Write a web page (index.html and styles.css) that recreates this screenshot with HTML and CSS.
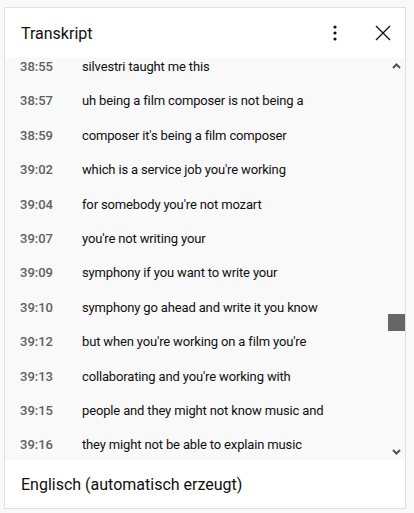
FILE: index.html
```html
<!DOCTYPE html>
<html>
<head>
<meta charset="utf-8">
<link rel="stylesheet" href="styles.css">
</head>
<body>
<div class="panel">
  <div class="header">
    <div class="title">Transkript</div>
    <div class="actions">
      <svg class="icon-more" width="24" height="24" viewBox="0 0 24 24"><circle cx="12" cy="6" r="1.6"/><circle cx="12" cy="12" r="1.6"/><circle cx="12" cy="18" r="1.6"/></svg>
      <svg class="icon-close" width="24" height="24" viewBox="0 0 24 24"><path d="M5 5 L19 19 M19 5 L5 19" stroke="#0f0f0f" stroke-width="1.3" fill="none"/></svg>
    </div>
  </div>
  <div class="body">
    <div class="list">
      <div class="rows">
        <div class="row"><span class="ts">38:55</span><span class="txt">silvestri taught me this</span></div>
        <div class="row"><span class="ts">38:57</span><span class="txt">uh being a film composer is not being a</span></div>
        <div class="row"><span class="ts">38:59</span><span class="txt">composer it's being a film composer</span></div>
        <div class="row"><span class="ts">39:02</span><span class="txt">which is a service job you're working</span></div>
        <div class="row"><span class="ts">39:04</span><span class="txt">for somebody you're not mozart</span></div>
        <div class="row"><span class="ts">39:07</span><span class="txt">you're not writing your</span></div>
        <div class="row"><span class="ts">39:09</span><span class="txt">symphony if you want to write your</span></div>
        <div class="row"><span class="ts">39:10</span><span class="txt">symphony go ahead and write it you know</span></div>
        <div class="row"><span class="ts">39:12</span><span class="txt">but when you're working on a film you're</span></div>
        <div class="row"><span class="ts">39:13</span><span class="txt">collaborating and you're working with</span></div>
        <div class="row"><span class="ts">39:15</span><span class="txt">people and they might not know music and</span></div>
        <div class="row"><span class="ts">39:16</span><span class="txt">they might not be able to explain music</span></div>
      </div>
    </div>
    <div class="scrollbar">
      <svg class="arrow" width="17" height="17" viewBox="0 0 17 17"><path d="M5 10 L8.5 6.5 L12 10" stroke="#505050" stroke-width="2" fill="none"/></svg>
      <div class="track"><div class="thumb" style="margin-top:239px"></div></div>
      <svg class="arrow" width="17" height="17" viewBox="0 0 17 17"><path d="M5 7 L8.5 10.5 L12 7" stroke="#505050" stroke-width="2" fill="none"/></svg>
    </div>
  </div>
  <div class="footer">Englisch (automatisch erzeugt)</div>
</div>
</body>
</html>
```

FILE: styles.css
```css
html, body {
  margin: 0;
  padding: 0;
}
body {
  background: #f9f9f9;
  font-family: Roboto, "Liberation Sans", sans-serif;
  color: #0f0f0f;
  padding: 7px 8px 0 4px;
  width: 402px;
}
.panel {
  width: 400px;
  height: 500px;
  border: 1px solid #e0e0e0;
  background: #fff;
  display: flex;
  flex-direction: column;
}
.header {
  height: 50px;
  display: flex;
  align-items: center;
  justify-content: space-between;
  padding: 0 10px 0 16px;
  box-sizing: border-box;
  flex: none;
}
.title {
  font-size: 16px;
  line-height: 24px;
  margin-top: 1px;
}
.actions {
  display: flex;
  align-items: center;
  gap: 24px;
}
.icon-more {
  fill: #0f0f0f;
}
.body {
  height: 402px;
  flex: none;
  display: flex;
  background: #f9f9f9;
  overflow: hidden;
}
.list {
  flex: 1;
  overflow: hidden;
}
.rows {
  margin-top: -8.6px;
}
.row {
  height: 34.4px;
  display: flex;
  align-items: center;
  font-size: 13px;
  padding-left: 15px;
}
.ts {
  width: 62px;
  color: #606060;
  font-weight: 500;
  flex: none;
}
.txt {
  color: #0f0f0f;
  white-space: nowrap;
  letter-spacing: -0.15px;
}
.scrollbar {
  width: 17px;
  flex: none;
  display: flex;
  flex-direction: column;
}
.arrow {
  flex: none;
  display: block;
}
.track {
  flex: 1;
}
.thumb {
  width: 17px;
  height: 17px;
  background: #666;
}
.footer {
  flex: 1;
  display: flex;
  align-items: center;
  padding-left: 16px;
  font-size: 16px;
}
```
